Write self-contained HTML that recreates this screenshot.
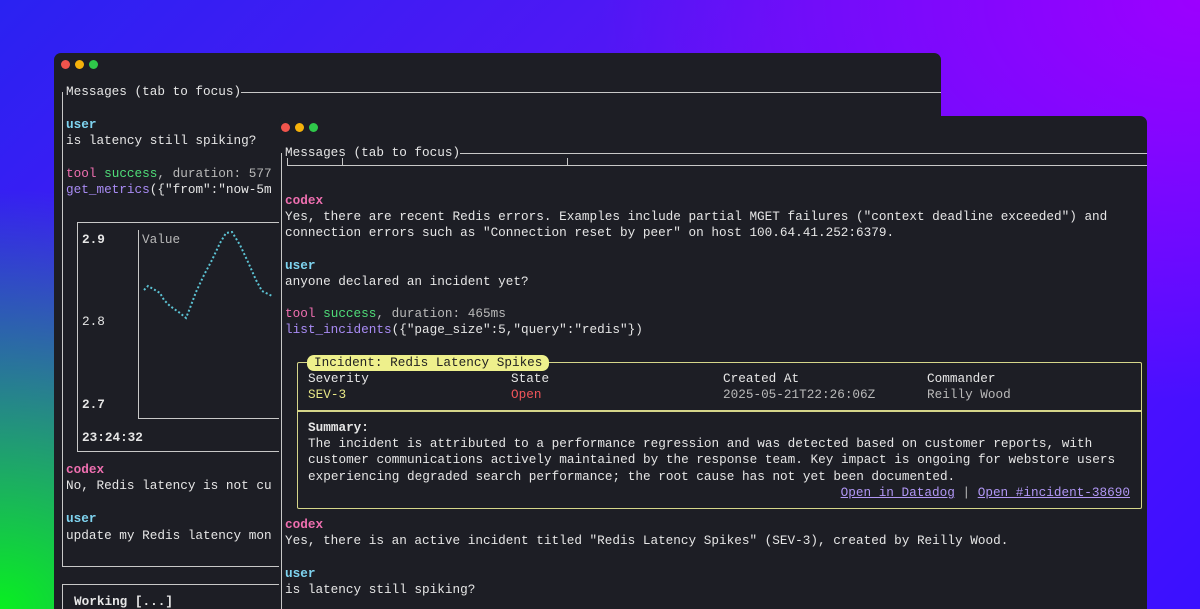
<!DOCTYPE html>
<html style="width:1200px;height:609px;overflow:hidden"><head><meta charset="utf-8"><style>
*{margin:0;padding:0;box-sizing:border-box}
body{width:1200px;height:609px;overflow:hidden;position:relative;font-family:"Liberation Mono",monospace;font-size:12.7px;color:#e6e6e6;
background:
radial-gradient(ellipse 520px 420px at 0px 609px,#08f020 0%,rgba(8,240,32,0.6) 40%,rgba(8,240,32,0) 100%),
radial-gradient(ellipse 600px 400px at 1200px 0px,#9c00ff 0%,rgba(156,0,255,0) 100%),
linear-gradient(135deg,#2a22f2 0%,#5a14f6 45%,#5a10ff 70%,#3a10ff 100%);}
.win{position:absolute;background:#1d1e25;border-radius:7px 7px 0 0;overflow:hidden}
.dot{position:absolute;width:9px;height:9px;border-radius:50%}
.t{position:absolute;white-space:pre;line-height:16px;margin-top:1px}
.u{color:#7fd4f0}.c{color:#ef6fb0}.g{color:#4fdc78}.p{color:#a98cf5}.y{color:#e8e886}.r{color:#f0555a}.d{color:#b9b9b9}
.b{font-weight:bold}
.hl{position:absolute;height:1px;background:#c8c8c8}
.vl{position:absolute;width:1px;background:#c8c8c8}
a{color:#b197f5;text-decoration:underline}
</style></head><body>

<div class="win" style="left:54px;top:53px;width:887px;height:556px">
<div class="dot" style="left:7px;top:7px;background:#f0544c"></div>
<div class="dot" style="left:21px;top:7px;background:#f5b20b"></div>
<div class="dot" style="left:35px;top:7px;background:#2fc84a"></div>
<div class="t" style="left:12px;top:30px">Messages (tab to focus)</div>
<div class="hl" style="left:187px;top:39px;width:700px"></div>
<div class="vl" style="left:8px;top:39px;height:475px"></div>
<div class="hl" style="left:8px;top:513px;width:230px"></div>
<div class="t u b" style="left:12px;top:63px">user</div>
<div class="t" style="left:12px;top:79px">is latency still spiking?</div>
<div class="t" style="left:12px;top:112px"><span class="c">tool</span> <span class="g">success</span><span class="d">, duration: 577</span></div>
<div class="t" style="left:12px;top:128px"><span class="p">get_metrics</span>({"from":"now-5m</div>
<div class="hl" style="left:23px;top:169px;width:220px"></div>
<div class="vl" style="left:23px;top:169px;height:230px"></div>
<div class="hl" style="left:23px;top:398px;width:220px"></div>
<div class="t b" style="left:28px;top:178px">2.9</div>
<div class="t" style="left:28px;top:260px">2.8</div>
<div class="t b" style="left:28px;top:343px">2.7</div>
<div class="t b" style="left:28px;top:376px">23:24:32</div>
<div class="vl" style="left:84px;top:177px;height:188px"></div>
<div class="hl" style="left:84px;top:365px;width:160px"></div>
<div class="t d" style="left:88px;top:178px">Value</div>
<div class="t c b" style="left:12px;top:408px">codex</div>
<div class="t" style="left:12px;top:424px">No, Redis latency is not cu</div>
<div class="t u b" style="left:12px;top:457px">user</div>
<div class="t" style="left:12px;top:474px">update my Redis latency mon</div>
<div class="hl" style="left:8px;top:531px;width:230px"></div>
<div class="vl" style="left:8px;top:531px;height:40px"></div>
<div class="t b" style="left:20px;top:540px">Working [...]</div>
</div>
<svg style="position:absolute;left:0;top:0" width="1200" height="609"><polyline points="144,290 148,286 155,290 160,293 164,300 170,306 180,313 186,318 190,308 196,292 204,275 212,260 220,243 226,233 232,232 240,245 248,262 256,280 262,291 272,296" fill="none" stroke="#5cc3d4" stroke-width="2" stroke-dasharray="2 2.2"/></svg>

<div class="win" style="left:279px;top:116px;width:868px;height:493px">
<div class="dot" style="left:2px;top:7px;background:#f0544c"></div>
<div class="dot" style="left:16px;top:7px;background:#f5b20b"></div>
<div class="dot" style="left:30px;top:7px;background:#2fc84a"></div>
<div class="t" style="left:6px;top:28px">Messages (tab to focus)</div>
<div class="hl" style="left:181px;top:37px;width:700px"></div>
<div class="vl" style="left:2px;top:37px;height:480px"></div>
<div class="hl" style="left:8px;top:49px;width:870px"></div>
<div class="vl" style="left:8px;top:42px;height:8px"></div>
<div class="vl" style="left:63px;top:42px;height:8px"></div>
<div class="vl" style="left:288px;top:42px;height:8px"></div>
<div class="t c b" style="left:6px;top:76px">codex</div>
<div class="t" style="left:6px;top:92px">Yes, there are recent Redis errors. Examples include partial MGET failures ("context deadline exceeded") and</div>
<div class="t" style="left:6px;top:108px">connection errors such as "Connection reset by peer" on host 100.64.41.252:6379.</div>
<div class="t u b" style="left:6px;top:141px">user</div>
<div class="t" style="left:6px;top:157px">anyone declared an incident yet?</div>
<div class="t" style="left:6px;top:189px"><span class="c">tool</span> <span class="g">success</span><span class="d">, duration: 465ms</span></div>
<div class="t" style="left:6px;top:205px"><span class="p">list_incidents</span>({"page_size":5,"query":"redis"})</div>
<div style="position:absolute;left:18px;top:246px;width:845px;height:147px;border:1.5px solid #d6d68a;border-radius:2px"></div>
<div style="position:absolute;left:18px;top:294px;width:845px;height:1.5px;background:#d6d68a"></div>
<div class="t" style="left:28px;top:238px;background:#eef08c;color:#222;border-radius:7px;padding:0 7px;height:16px">Incident: Redis Latency Spikes</div>
<div class="t" style="left:29px;top:254px">Severity</div>
<div class="t" style="left:232px;top:254px">State</div>
<div class="t" style="left:444px;top:254px">Created At</div>
<div class="t" style="left:648px;top:254px">Commander</div>
<div class="t y" style="left:29px;top:270px">SEV-3</div>
<div class="t r" style="left:232px;top:270px">Open</div>
<div class="t d" style="left:444px;top:270px">2025-05-21T22:26:06Z</div>
<div class="t d" style="left:648px;top:270px">Reilly Wood</div>
<div class="t b" style="left:29px;top:303px">Summary:</div>
<div class="t" style="left:29px;top:319px">The incident is attributed to a performance regression and was detected based on customer reports, with</div>
<div class="t" style="left:29px;top:335px">customer communications actively maintained by the response team. Key impact is ongoing for webstore users</div>
<div class="t" style="left:29px;top:352px">experiencing degraded search performance; the root cause has not yet been documented.</div>
<div class="t" style="right:17px;top:368px"><a>Open in Datadog</a> <span class="d">|</span> <a>Open #incident-38690</a></div>
<div class="t c b" style="left:6px;top:400px">codex</div>
<div class="t" style="left:6px;top:416px">Yes, there is an active incident titled "Redis Latency Spikes" (SEV-3), created by Reilly Wood.</div>
<div class="t u b" style="left:6px;top:449px">user</div>
<div class="t" style="left:6px;top:465px">is latency still spiking?</div>
</div>
</body></html>
